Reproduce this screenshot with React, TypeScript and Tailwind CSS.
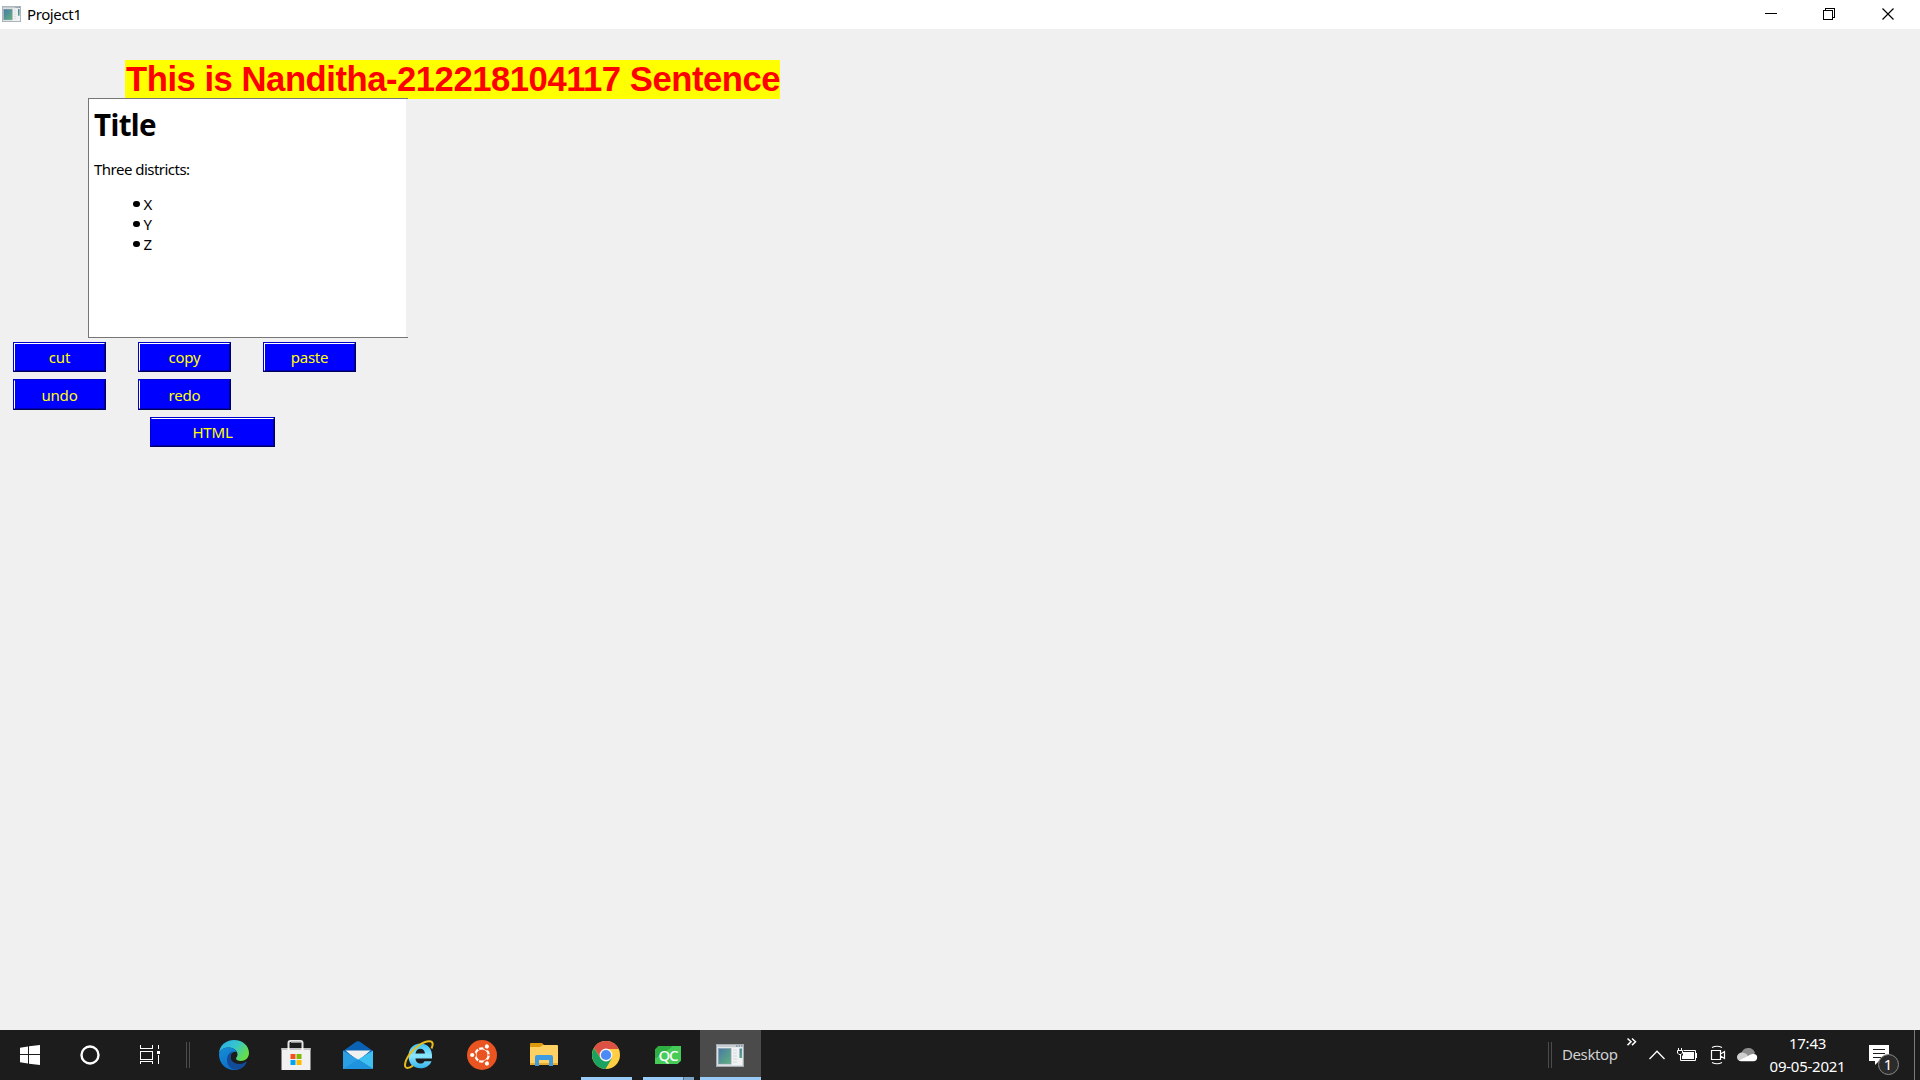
import type { ReactNode } from "react";

function AppGlyph({ w, h }: { w: number; h: number }) {
  return (
    <svg width={w} height={h} viewBox="0 0 28 23" preserveAspectRatio="none" className="block">
      <defs>
        <linearGradient id="scr" x1="0" y1="0" x2="1" y2="1">
          <stop offset="0" stopColor="#4a78a8" />
          <stop offset="1" stopColor="#5fb37c" />
        </linearGradient>
      </defs>
      <rect x="0.6" y="0.6" width="26.8" height="21.8" fill="#f1f2f3" stroke="#a3abb0" strokeWidth="1.3" />
      <rect x="1.5" y="1.2" width="25" height="2" fill="#c4cacf" />
      <path d="M20 2h1.500M22.500 2h1.500M25 2h1.500" stroke="#54718c" strokeWidth="1" />
      <rect x="2.500" y="4.500" width="12.500" height="15.500" fill="url(#scr)" stroke="#8aa0ac" strokeWidth="0.8" />
      <path d="M17 6h4M17 9h4M17 12h4M17 15h4M17 18h4" stroke="#d3d6d8" strokeWidth="1" />
      <rect x="23.500" y="4.500" width="2.500" height="9.500" fill="url(#scr)" />
    </svg>
  );
}

function TitleBar() {
  return (
    <header className="flex h-[29px] items-start bg-white">
      <div className="ml-[2px] mt-[6px]">
        <AppGlyph w={19} h={16} />
      </div>
      <span className="ml-[6px] mt-[4px] text-[15px] leading-5 tracking-[-0.4px] text-black">Project1</span>
      <svg width="155" height="29" viewBox="1765 0 155 29" className="ml-auto" fill="none" stroke="#000" shapeRendering="crispEdges">
        <path d="M1765 13.500h12" />
        <path d="M1823.500 10.500h9v9h-9zM1825.500 10v-1.500h9v9h-2" />
        <path d="M1882.500 8.500l11 11M1893.500 8.500l-11 11" strokeWidth="1.2" shapeRendering="auto" />
      </svg>
    </header>
  );
}

const buttonText = "text-[15px] leading-5 tracking-[-0.2px] text-[#ffff00] border";
const buttonEdges = "border-t-[#0000cc] border-l-[#0000cc] border-r-[#000060] border-b-[#000060] bg-[#0000ff]";

function FormButton({ label, className, lit }: { label: string; className: string; lit: string }) {
  return (
    <button className={`flex ${buttonText} ${buttonEdges} ${className}`}>
      <span className={`flex h-full w-full items-center justify-center border-r border-b border-r-[#0000a0] border-b-[#0000b0] ${lit}`}>
        {label}
      </span>
    </button>
  );
}

function Editor() {
  return (
    <section className="relative -mt-px ml-[88px] flex h-[240px] w-[320px] border-y border-l border-[#767676] bg-[#f0f0f0]">
      <div className="h-full w-[317px] bg-white pl-[5px] text-[15px] text-black">
        <h1 className="pt-[7px] text-[29.5px] font-bold leading-[38px] tracking-[-0.6px]">Title</h1>
        <p className="mt-[15px] leading-5 tracking-[-0.52px]">Three districts:</p>
        <ul className="mt-[15px] pl-[39px]">
          {["X", "Y", "Z"].map((d) => (
            <li key={d} className="flex h-5 items-center">
              <i className="mr-[4px] block h-[6.500px] w-[6.500px] rounded-full bg-black" />
              <span className="leading-5">{d}</span>
            </li>
          ))}
        </ul>
      </div>
    </section>
  );
}

function Edge() {
  return (
    <svg width="30" height="30" viewBox="0 0 30 30">
      <defs>
        <linearGradient id="e1" x1="0" y1="0" x2="1" y2="0.5">
          <stop offset="0" stopColor="#2aa9e8" />
          <stop offset="0.55" stopColor="#35c6d0" />
          <stop offset="1" stopColor="#66dd4a" />
        </linearGradient>
        <linearGradient id="e2" x1="0" y1="0" x2="0.6" y2="1">
          <stop offset="0" stopColor="#168ed8" />
          <stop offset="1" stopColor="#0c6cc4" />
        </linearGradient>
      </defs>
      <path d="M0 14C0 5.500 7 0 15 0c9 0 15 6 15 13 0 5-4 8-8 8-3 0-5-1-5-2.500 0-1 1.500-1.500 1.500-4 0-4-4-7-9-7C4 7.500.8 10.500 0 14z" fill="url(#e1)" />
      <path d="M0 14c1-4 4.500-6.500 9.500-6.500 4 0 7 2 8.300 4.500-3-1-6.300 1-6.300 5 0 5 4 9 9.500 9 2 0 4-.6 5.500-1.500C24 28 20 30 15 30 6.500 30 0 23.500 0 14z" fill="url(#e2)" />
      <path d="M8 20c0-5 3-8 6.500-8.500-2 1-3 3-3 5.500 0 4 4 7 9 7 3 0 5.500-1.500 6.500-2.500 1 0 .8.800.2 1.700C25 26.500 21 29.500 16.500 29.500 11.500 29.500 8 25 8 20z" fill="#124b98" />
    </svg>
  );
}

function Store() {
  return (
    <svg width="30" height="30" viewBox="0 0 30 30" className="mr-px">
      <path d="M7.500 9V3q0-2 2-2h10q2 0 2 2v6" fill="none" stroke="#e6e6e6" strokeWidth="2" />
      <path d="M10 2h10" stroke="#b8b8b8" strokeWidth="1.500" />
      <path d="M.5 8h29v22H.5z" fill="#f1f1f1" />
      <path d="M.5 8h29v2H.5z" fill="#c6c6c6" />
      <path d="M6.500 8h2v2h-2zM20.500 8h2v2h-2z" fill="#fff" />
      <path d="M9.500 14h5v5h-5z" fill="#f25022" />
      <path d="M15.500 14h5v5h-5z" fill="#7fba00" />
      <path d="M9.500 20h5v5h-5z" fill="#00a4ef" />
      <path d="M15.500 20h5v5h-5z" fill="#ffb900" />
    </svg>
  );
}

function Mail() {
  return (
    <svg width="30" height="28" viewBox="0 0 30 28">
      <path d="M0 10L12 1.500Q15-.8 18 1.500L30 10v4H0z" fill="#0a62b5" />
      <path d="M2.500 9.500h25L15 20z" fill="#f1f1f1" />
      <path d="M0 9.500l15 9L30 28H0z" fill="#2a9fe4" />
      <path d="M30 9.500v18.500L15 18.500z" fill="#3ec0f2" />
      <path d="M0 28l15-9.500L30 28z" fill="#1f93de" />
    </svg>
  );
}

function InternetExplorer() {
  return (
    <svg width="30" height="30" viewBox="0 0 30 30" fill="none" className="mr-[3px]">
      <defs>
        <linearGradient id="ie" x1="0" y1="0" x2="0" y2="1">
          <stop offset="0" stopColor="#3cc2f2" />
          <stop offset="0.5" stopColor="#8be6fc" />
          <stop offset="1" stopColor="#35b4ec" />
        </linearGradient>
      </defs>
      <path d="M28 18.500H11.500c.2 3.500 2.300 5 5 5 2 0 3.300-.8 4-2.300h7c-1.500 4.300-5.500 7-11 7C9 28.200 4.500 23.500 4.500 16S9.500 3.500 16.500 3.500 28 8.500 28 15.500zM11.500 13.500H21c-.3-3-2-4.700-4.600-4.700-2.700 0-4.400 1.700-4.900 4.700z" fill="url(#ie)" />
      <path d="M27.500 8.500C29.500 4 29 1.500 25.500 1.300 20 1 10 7.500 5 15S0 28 3.500 28c1.500 0 3.500-.8 5.500-2.500" stroke="#e8bd1c" strokeWidth="2" />
    </svg>
  );
}

function Ubuntu() {
  return (
    <svg width="30" height="30" viewBox="0 0 30 30">
      <circle cx="15" cy="15" r="15" fill="#e95420" />
      <circle cx="15" cy="15" r="6.700" fill="none" stroke="#fff" strokeWidth="2.300" />
      {[0, 120, 240].map((a) => (
        <g key={a} transform={`rotate(${a} 15 15)`}>
          <circle cx="5.800" cy="15" r="3.200" fill="#e95420" />
          <circle cx="5.200" cy="15" r="2.100" fill="#fff" />
          <path d="M21 15h3" stroke="#e95420" strokeWidth="1.300" />
        </g>
      ))}
    </svg>
  );
}

function Folder() {
  return (
    <svg width="28" height="23" viewBox="0 0 28 23" className="mb-[2px]">
      <path d="M0 1q0-1 1-1h11l2 2v4H0z" fill="#dd9a0c" />
      <path d="M0 4h10l3-2h14q1 0 1 1v18H0z" fill="#ffd062" />
      <path d="M0 20h28v2H0z" fill="#e9ac31" />
      <path d="M5 23V14q0-2 2-2h14q2 0 2 2v9h-4v-6H9v6z" fill="#3f9be0" />
    </svg>
  );
}

function Chrome() {
  return (
    <svg width="28" height="28" viewBox="0 0 28 28">
      <circle cx="14" cy="14" r="14" fill="#ffce42" />
      <path d="M1.900 7A14 14 0 0 1 26.600 8H14L8.300 16.500z" fill="#dd5144" />
      <path d="M1.900 7A14 14 0 0 0 13.500 28L19.800 17.500 9 18z" fill="#1aa260" />
      <circle cx="14" cy="14" r="6.400" fill="#f4f4f4" />
      <circle cx="14" cy="14" r="5.100" fill="#4c8bf5" />
    </svg>
  );
}

function QtCreator() {
  return (
    <div className="h-[18px] w-[26px] bg-linear-to-br from-[#2fae42] from-35% to-[#45cc58] to-35% text-center font-['Noto_Sans',sans-serif] text-[15px] font-medium leading-[18px] tracking-[-1.200px] text-white [clip-path:polygon(13%_0,100%_0,100%_82%,87%_100%,0_100%,0_18%)]">
      QC
    </div>
  );
}

function Slot({ children, running, split, active }: { children: ReactNode; running?: boolean; split?: boolean; active?: boolean }) {
  return (
    <div className={`flex h-[50px] w-[62px] flex-col ${active ? "pl-px" : ""}`}>
      <div className={`flex h-[47px] items-center justify-center pt-[3px] ${active ? "bg-[#4b4b4b] pr-[2px]" : ""}`}>{children}</div>
      {running && (
        <div className={`flex h-[3px] ${active ? "" : "mx-[6px] w-[51px]"}`}>
          <div className="h-full flex-1 bg-[#99cbf8]" />
          {split && <div className="h-full w-[11px] border-l border-[#4f6f8b] bg-[#7ba3c7]" />}
        </div>
      )}
    </div>
  );
}

function Grip() {
  return <div className="mt-[12px] h-[26px] w-[4px] border-x border-[#4c4c4c]" />;
}

function Taskbar() {
  return (
    <footer className="flex h-[50px] bg-[#1c1c1c] text-white">
      <svg width="186" height="50" viewBox="0 0 186 50" fill="none">
        <path d="M20 17.700l8-1.200V24h-8zM29 16.300L40 15v9H29zM20 25h8v8.500l-8-1.200zM29 25h11v10l-11-1.300z" fill="#fff" />
        <circle cx="90" cy="25" r="8.500" stroke="#fff" strokeWidth="2.400" />
        <g stroke="#fff" shapeRendering="crispEdges">
          <path d="M140.500 15v3.500h12V15M140.500 21.500h12v8h-12zM140.500 34v-2.500h12V34M158.500 15v4M158.500 25v9" />
          <path d="M157 21h3v3h-3z" fill="#fff" stroke="none" />
        </g>
      </svg>
      <Grip />
      <nav className="ml-[13px] flex">
        <Slot><Edge /></Slot>
        <Slot><Store /></Slot>
        <Slot><Mail /></Slot>
        <Slot><InternetExplorer /></Slot>
        <Slot><Ubuntu /></Slot>
        <Slot><Folder /></Slot>
        <Slot running><Chrome /></Slot>
        <Slot running split><QtCreator /></Slot>
        <Slot running active><AppGlyph w={28} h={23} /></Slot>
      </nav>
      <div className="ml-auto flex">
        <Grip />
        <span className="ml-[10px] mt-[14px] w-[65px] text-[15px] leading-5 tracking-[-0.400px] text-[#d0d0d0]">Desktop</span>
        <svg width="133" height="50" viewBox="1627 1030 133 50" fill="none" stroke="#fff">
          <path d="M1627.500 1038.500l3.500 3.300-3.500 3.300M1632 1038.500l3.500 3.300-3.500 3.300" strokeWidth="1.500" />
          <path d="M1649.500 1059l7.500-7.800 7.500 7.800" strokeWidth="1.300" />
          <path d="M1683.500 1050.500h12v10h-15v-4" />
          <path d="M1683 1052h11v7h-12v-3l1-1z" fill="#fff" stroke="none" />
          <path d="M1696.500 1053v5M1678.500 1048v2M1681.500 1048v2M1677.500 1050.500h5v2.500l-1.500 1.500h-2l-1.500-1.500zM1680.500 1054.500v4" />
          <path d="M1711.500 1050.500h9v9h-9zM1720.500 1054l4-2.500v7l-4-2.500M1712 1047.500q5-2.500 10 0M1712 1062.500q5 2.500 10 0" strokeWidth="1.200" />
          <path d="M1741 1056c0-5 3-8 7-8s6 2 7 5l-6 7z" fill="#8d8d8d" stroke="none" />
          <path d="M1741 1061c-3 0-4-2-4-4s2-4.500 5-4.500c2 0 4 1 5 2l3 6.500z" fill="#cfcfcf" stroke="none" />
          <path d="M1739 1060.500l9-4.500c2-1.500 4-2 5.500-2 2.500 0 3.700 1.500 3.700 3.500 0 2.300-1.500 3.700-3.700 3.700H1741q-1 0-2-.7z" fill="#fff" stroke="none" />
        </svg>
        <div className="mt-[2px] flex w-[95px] flex-col items-center text-[15px] leading-[23px] tracking-[-0.250px]">
          <span>17:43</span>
          <span>09-05-2021</span>
        </div>
        <div className="relative w-[59px]">
          <svg width="59" height="50" viewBox="1855 1030 59 50" fill="none">
            <path d="M1869 1045h20v16h-10l-4 4v-4h-6z" fill="#fff" />
            <path d="M1873 1049.500h12M1873 1053.500h12M1873 1057.500h8" stroke="#1c1c1c" />
            <circle cx="1888.500" cy="1064.500" r="10" fill="#2b2b2b" stroke="#8a8a8a" />
          </svg>
          <span className="absolute left-[23px] top-[24px] w-[20px] text-center text-[15px] leading-5">1</span>
        </div>
        <div className="w-[6px] border-l border-[#7a7a7a]" />
      </div>
    </footer>
  );
}

export default function App() {
  return (
    <div className="flex h-[1080px] w-[1920px] flex-col overflow-hidden bg-[#f0f0f0] font-['Noto_Sans',sans-serif]">
      <TitleBar />
      <main className="flex flex-1 flex-col items-start pt-[31px]">
        <h2 className="ml-[125px] h-[39px] w-[655px] whitespace-nowrap bg-[#ffff00] pl-px font-['Liberation_Sans',Arial,sans-serif] text-[34.67px] font-bold leading-[38px] tracking-[-0.480px] text-[#ff0000]">
          This is Nanditha-212218104117 Sentence
        </h2>
        <Editor />
        <div className="ml-[13px] mt-[4px] flex gap-[32px]">
          <FormButton label="cut" className="h-[30px] w-[93px]" lit="border-t border-l border-t-white border-l-white" />
          <FormButton label="copy" className="h-[30px] w-[93px]" lit="border-t border-l border-t-white border-l-white" />
          <FormButton label="paste" className="h-[30px] w-[93px]" lit="border-t border-l border-t-white border-l-white" />
        </div>
        <div className="ml-[13px] mt-[7px] flex gap-[32px]">
          <FormButton label="undo" className="h-[31px] w-[93px]" lit="border-t border-l border-t-[#0000ff] border-l-white pt-px" />
          <FormButton label="redo" className="h-[31px] w-[93px]" lit="border-t border-l border-t-[#0000ff] border-l-white pt-px" />
        </div>
        <FormButton label="HTML" className="ml-[150px] mt-[7px] h-[30px] w-[125px]" lit="border-t border-l border-t-white border-l-[#0000ff]" />
      </main>
      <Taskbar />
    </div>
  );
}
